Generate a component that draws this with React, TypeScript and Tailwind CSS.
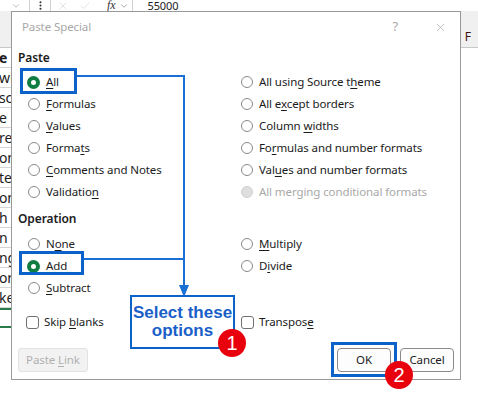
import React from "react";
import { ChevronDown, X, Check, EllipsisVertical } from "lucide-react";

function Acc({ text, i }: { text: string; i: number }) {
  if (i < 0) return <span className="whitespace-pre">{text}</span>;
  return (
    <span className="whitespace-pre">
      {text.slice(0, i)}
      <span className="underline decoration-1 underline-offset-[2px]">{text[i]}</span>
      {text.slice(i + 1)}
    </span>
  );
}

function Radio({ label, u, checked, disabled }: { label: string; u: number; checked?: boolean; disabled?: boolean }) {
  return (
    <div className="flex h-[22px] items-center gap-[6px]">
      <span className="flex h-[13px] w-[13px] shrink-0 items-center justify-center">
        {checked ? (
          <span className="h-[13px] w-[13px] rounded-full border-[4px] border-[#107c41] bg-white" />
        ) : disabled ? (
          <span className="h-[12px] w-[12px] rounded-full border border-[#d0d0d0] bg-[#dedede]" />
        ) : (
          <span className="h-[12px] w-[12px] rounded-full border border-[#8a8a8a] bg-white" />
        )}
      </span>
      <span className={disabled ? "text-[#a8a8a8]" : "text-[#1b1b1b]"}>
        <Acc text={label} i={u} />
      </span>
    </div>
  );
}

function Checkbox({ label, u }: { label: string; u: number }) {
  return (
    <div className="flex h-[22px] items-center gap-[5px]">
      <span className="h-[13px] w-[13px] shrink-0 rounded-[3px] border border-[#707070] bg-white" />
      <span className="text-[#1b1b1b]">
        <Acc text={label} i={u} />
      </span>
    </div>
  );
}

const rows = ["e", "wis", "sc", "e", "re", "on", "ter", "on", "h", "n", "ng", "or", "ke"];

export default function App() {
  return (
    <div className="relative h-[397px] w-[478px] overflow-hidden bg-white font-['Noto_Sans','Open_Sans',sans-serif] text-[11.5px] tracking-[-0.1px]">
      {/* background spreadsheet */}
      <div className="flex h-[11px] items-center text-[#9a9a9a]">
        <ChevronDown className="ml-[11px] h-[10px] w-[10px]" strokeWidth={1.5} />
        <span className="ml-[8px] h-[11px] w-px bg-[#d0d0d0]" />
        <EllipsisVertical className="ml-[5px] h-[11px] w-[11px] text-[#333]" strokeWidth={2.5} />
        <span className="ml-[4px] h-[11px] w-px bg-[#d0d0d0]" />
        <X className="ml-[6px] h-[12px] w-[12px] text-[#c4c4c4]" strokeWidth={1} />
        <Check className="ml-[10px] h-[12px] w-[12px] text-[#c4c4c4]" strokeWidth={1} />
        <span className="ml-[16px] font-['Liberation_Serif',serif] text-[12px] italic leading-[11px] text-[#333]">fx</span>
        <ChevronDown className="ml-[4px] h-[10px] w-[10px] text-[#777]" strokeWidth={1.5} />
        <span className="ml-[3px] h-[11px] w-px bg-[#d0d0d0]" />
        <span className="ml-[14px] text-[11px] leading-[11px] text-[#222]">55000</span>
      </div>
      <div className="flex h-[37px] items-end justify-end border-b border-[#c8c8c8] bg-[#f0f0f0]">
        <span className="mb-[4px] mr-[7px] text-[12px] leading-none text-[#3a1010]">F</span>
      </div>
      <div className="flex w-[12px] flex-col">
        {rows.map((r, i) => (
          <div
            key={i}
            className={`flex h-[20px] items-center border-b border-[#d4d4d4] text-[14px] text-[#1c1c1c] ${i === 0 ? "font-bold" : ""}`}
          >
            <span className="-ml-[1px] whitespace-nowrap">{r}</span>
          </div>
        ))}
        <div className="h-[20px] border-y-2 border-dashed border-[#2a7a4a]" />
      </div>

      {/* dialog */}
      <div className="absolute left-[11px] top-[11px] flex h-[369px] w-[450px] flex-col border border-[#999] bg-white">
        <div className="flex h-[30px] items-center pl-[10px]">
          <span className="text-[11.5px] text-[#a8a8a8]">Paste Special</span>
          <span className="ml-auto text-[13px] text-[#a8a8a8]">?</span>
          <X className="ml-[36px] mr-[13px] h-[13px] w-[13px] text-[#a0a0a0]" strokeWidth={1.2} />
        </div>
        <div className="flex flex-1 flex-col pl-[6px] pr-[6px]">
          <div className="mt-[8px] h-[16px] text-[12px] font-semibold leading-[16px] text-[#1b1b1b]">Paste</div>
          <div className="ml-[9px] mt-[5px] grid grid-cols-[213px_1fr]">
            <div className="flex flex-col">
              <Radio label="All" u={0} checked />
              <Radio label="Formulas" u={0} />
              <Radio label="Values" u={0} />
              <Radio label="Formats" u={5} />
              <Radio label="Comments and Notes" u={0} />
              <Radio label="Validation" u={9} />
            </div>
            <div className="flex flex-col">
              <Radio label="All using Source theme" u={18} />
              <Radio label="All except borders" u={5} />
              <Radio label="Column widths" u={7} />
              <Radio label="Formulas and number formats" u={2} />
              <Radio label="Values and number formats" u={3} />
              <Radio label="All merging conditional formats" u={-1} disabled />
            </div>
          </div>
          <div className="mt-[8px] h-[16px] text-[12px] font-semibold leading-[16px] text-[#1b1b1b]">Operation</div>
          <div className="ml-[9px] mt-[6px] grid grid-cols-[213px_1fr]">
            <div className="flex flex-col">
              <Radio label="None" u={1} />
              <Radio label="Add" u={1} checked />
              <Radio label="Subtract" u={0} />
            </div>
            <div className="flex flex-col">
              <Radio label="Multiply" u={0} />
              <Radio label="Divide" u={1} />
            </div>
          </div>
          <div className="ml-[8px] mt-[12px] grid grid-cols-[215px_1fr]">
            <Checkbox label="Skip blanks" u={5} />
            <Checkbox label="Transpose" u={8} />
          </div>
          <div className="mt-[15px] flex h-[24px] items-center">
            <div className="flex h-[24px] w-[70px] items-center justify-center rounded-[3px] border border-[#e2e2e2] bg-[#f2f2f2] text-[#b0b0b0]">
              <Acc text="Paste Link" i={6} />
            </div>
            <div className="ml-auto flex h-[24px] w-[54px] items-center justify-center rounded-[4px] border border-[#8a8a8a] bg-[#fdfdfd] text-[#1b1b1b]">
              OK
            </div>
            <div className="ml-[9px] flex h-[24px] w-[54px] items-center justify-center rounded-[4px] border border-[#8a8a8a] bg-[#fdfdfd] text-[#1b1b1b]">
              Cancel
            </div>
          </div>
        </div>
      </div>

      {/* annotations */}
      <div className="absolute left-[20px] top-[68px] h-[26px] w-[57px] border-[3px] border-[#0b63c9]" />
      <div className="absolute left-[19px] top-[251px] h-[24px] w-[65px] border-[3px] border-[#0b63c9]" />
      <div className="absolute left-[77px] top-[75px] h-[2px] w-[108px] bg-[#1a6fd4]" />
      <div className="absolute left-[183px] top-[75px] h-[213px] w-[2px] bg-[#1a6fd4]" />
      <div className="absolute left-[84px] top-[258px] h-[2px] w-[100px] bg-[#1a6fd4]" />
      <svg className="absolute left-[179px] top-[285px]" width="10" height="12" viewBox="0 0 10 12">
        <polygon points="0,0 10,0 5,12" fill="#1a6fd4" />
      </svg>
      <div className="absolute left-[130px] top-[295px] flex h-[54px] w-[105px] flex-col items-center justify-center border-2 border-[#0b63c9] bg-white font-['Liberation_Sans',Arial,sans-serif] text-[17px] font-bold leading-[18px] tracking-normal text-[#1a5fc8]">
        <span>Select these</span>
        <span>options</span>
      </div>
      <div className="absolute left-[331px] top-[342px] h-[35px] w-[66px] border-[3px] border-[#0b63c9]" />
      <div className="absolute left-[218px] top-[329px] flex h-[28px] w-[28px] items-center justify-center rounded-full bg-[#e8000d] font-['Liberation_Sans',Arial,sans-serif] text-[20px] leading-none text-white">
        1
      </div>
      <div className="absolute left-[385px] top-[361px] flex h-[28px] w-[28px] items-center justify-center rounded-full bg-[#e8000d] font-['Liberation_Sans',Arial,sans-serif] text-[20px] leading-none text-white">
        2
      </div>
    </div>
  );
}
